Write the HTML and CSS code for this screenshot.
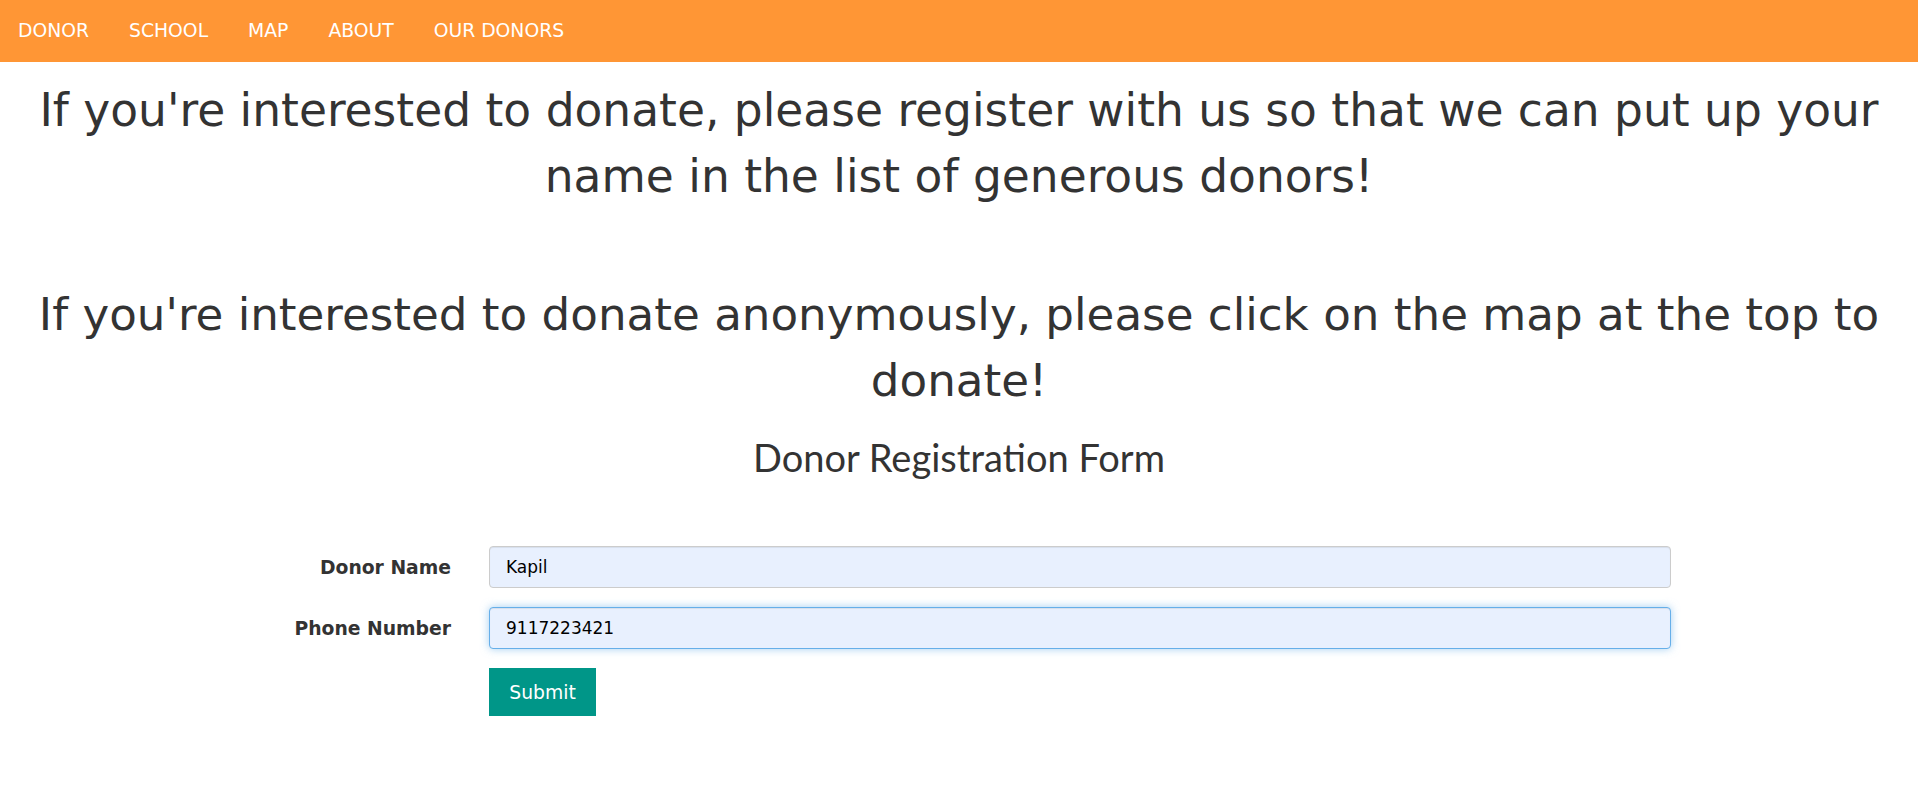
FILE: index.html
```html
<!DOCTYPE html>
<html lang="en">
<head>
<meta charset="utf-8">
<title>Donor Registration</title>
<link rel="stylesheet" href="styles.css">
</head>
<body>
<nav class="topnav">
  <a class="nav-link" href="#">DONOR</a>
  <a class="nav-link" href="#">SCHOOL</a>
  <a class="nav-link" href="#">MAP</a>
  <a class="nav-link" href="#">ABOUT</a>
  <a class="nav-link" href="#">OUR DONORS</a>
</nav>
<main class="content">
  <h1 class="intro">If you're interested to donate, please register with us so that we can put up your name in the list of generous donors!</h1>
  <h1 class="intro intro-second">If you're interested to donate anonymously, please click on the map at the top to donate!</h1>
  <h2 class="form-title">Donor Registration Form</h2>
  <form class="donor-form">
    <label class="field-label" for="name">Donor Name</label>
    <input class="field-input" id="name" type="text" value="Kapil">
    <label class="field-label" for="phone">Phone Number</label>
    <input class="field-input field-focus" id="phone" type="text" value="9117223421">
    <div class="form-actions">
      <button class="submit-btn" type="button">Submit</button>
    </div>
  </form>
</main>
</body>
</html>
```

FILE: styles.css
```css
html, body {
  margin: 0;
  padding: 0;
  background: #ffffff;
}

body {
  font-family: "DejaVu Sans", Verdana, sans-serif;
  color: #333333;
}

.topnav {
  height: 62px;
  background: #ff9635;
  display: flex;
  align-items: center;
  padding-left: 18px;
  gap: 40px;
}

.nav-link {
  color: #ffffff;
  text-decoration: none;
  font-size: 18.75px;
  line-height: 1;
  padding-top: 1px;
}

.content {
  padding: 0 15px;
}

.intro {
  margin: 16px 0 0;
  font-size: 45.5px;
  font-weight: normal;
  line-height: 66px;
  text-align: center;
  color: #333333;
}

.intro-second {
  margin-top: 72px;
  font-size: 45.2px;
}

.form-title {
  margin: 22px 0 0;
  text-align: center;
  font-family: Lato, "Open Sans", sans-serif;
  font-weight: normal;
  font-size: 38px;
  line-height: 42px;
  color: #333333;
}

.donor-form {
  margin: 68px 0 0 -15px;
  display: grid;
  grid-template-columns: 451px 1182px;
  column-gap: 38px;
  row-gap: 19px;
  align-items: center;
}

.field-label {
  text-align: right;
  font-weight: bold;
  font-size: 18.75px;
  color: #333333;
}

.field-input {
  box-sizing: border-box;
  height: 42px;
  width: 100%;
  margin: 0;
  padding: 0 16px;
  border: 1px solid #cccccc;
  border-radius: 4px;
  background: #e8f0fe;
  font-family: "DejaVu Sans", Verdana, sans-serif;
  font-size: 17px;
  color: #000000;
  box-shadow: inset 0 1px 1px rgba(0, 0, 0, 0.075);
  outline: none;
}

.field-focus {
  border-color: #66afe9;
  box-shadow: inset 0 1px 1px rgba(0, 0, 0, 0.075), 0 0 8px rgba(102, 175, 233, 0.6);
}

.form-actions {
  grid-column: 2;
}

.submit-btn {
  height: 48px;
  width: 107px;
  border: none;
  border-radius: 0;
  background: #009688;
  color: #ffffff;
  font-family: "DejaVu Sans", Verdana, sans-serif;
  font-size: 18.75px;
  padding: 0;
  cursor: pointer;
}
```
